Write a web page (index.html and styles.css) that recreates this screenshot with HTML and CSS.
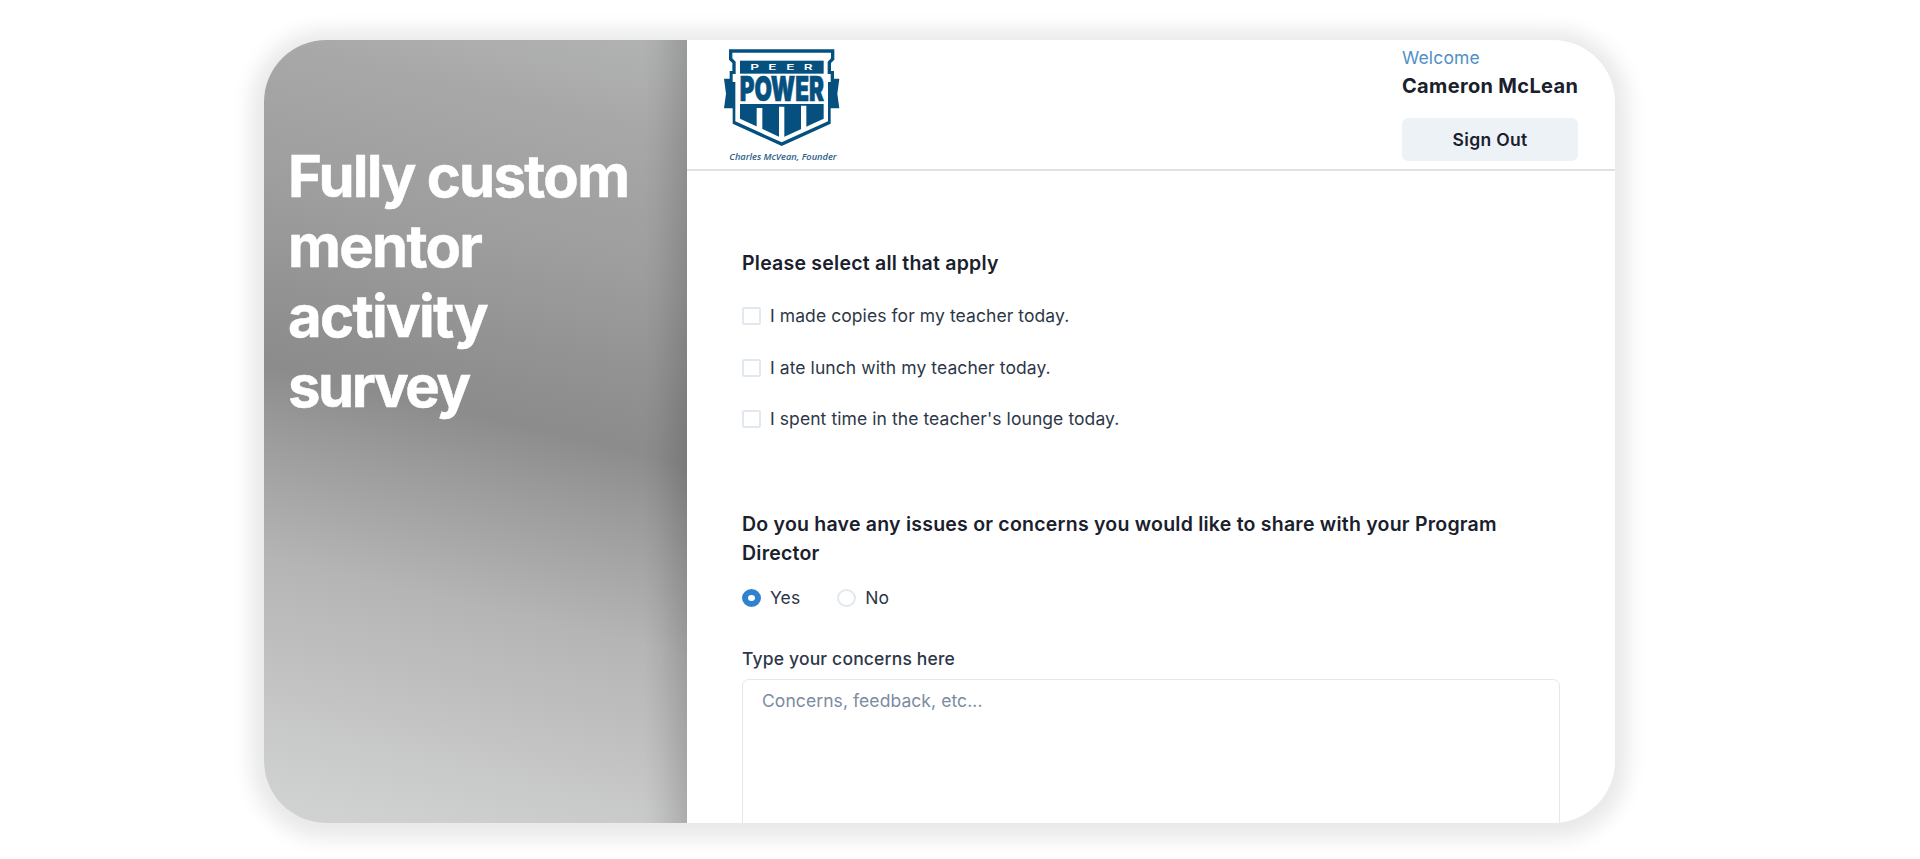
FILE: index.html
```html
<!DOCTYPE html>
<html lang="en">
<head>
  <meta charset="UTF-8" />
  <meta name="viewport" content="width=device-width, initial-scale=1.0"/>
  <title>Mentor Survey | Peer Power</title>
  <link rel="stylesheet" href="styles.css">
</head>
<body>

<div class="card">
  <aside class="promo">
    <h1>Fully custom<br>mentor<br>activity<br><span class="tight">survey</span></h1>
  </aside>

  <div class="survey">
    <header>
      <svg class="logo" viewBox="66 50 360 351" role="img" aria-label="Peer Power">
        <!-- shield -->
        <path fill="#05507f" d="M87 57H403V88L393 98V122H402V145H418L412 190L418 234H392V280L245 347L98 280V234H72L78 190L72 145H89V122H97V98L87 88Z"/>
        <path fill="#fff" d="M97 67H393V84L383 94V131H392V155H384V273L245 336L106 273V155H98V131H107V94L97 84Z"/>
        <rect fill="#05507f" x="120" y="91" width="251" height="39"/>
        <text class="logo-peer" transform="scale(1.7 1)" x="88.5 120.5 152 183" y="119">PEER</text>
        <text class="logo-power" x="119" y="212" textLength="253" lengthAdjust="spacingAndGlyphs">POWER</text>
        <!-- stripes -->
        <path fill="#05507f" d="M120 221H371V265L245 323L120 265Z"/>
        <path fill="#fff" d="M170 233H187V300H170ZM237 229H253V330H237ZM303 226H319V300H303Z"/>
        <text class="logo-founder" x="88" y="389" textLength="322" lengthAdjust="spacingAndGlyphs">Charles McVean, Founder</text>
      </svg>

      <div class="account">
        <p class="welcome">Welcome</p>
        <p class="user-name">Cameron McLean</p>
        <button>Sign Out</button>
      </div>
    </header>

    <main>
      <h2>Please select all that apply</h2>
      <ul class="checks">
        <li><label><input type="checkbox"><span>I made copies for my teacher today.</span></label></li>
        <li><label><input type="checkbox"><span>I ate lunch with my teacher today.</span></label></li>
        <li><label><input type="checkbox"><span>I spent time in the teacher's lounge today.</span></label></li>
      </ul>

      <h2 class="concerns-title">Do you have any issues or concerns you would like to share with your Program Director</h2>
      <div class="radios">
        <label><input type="radio" name="issues" checked><span>Yes</span></label>
        <label><input type="radio" name="issues"><span>No</span></label>
      </div>

      <label class="field-label" for="concerns">Type your concerns here</label>
      <textarea id="concerns" placeholder="Concerns, feedback, etc..."></textarea>
    </main>
  </div>
</div>

</body>
</html>
```

FILE: styles.css
```css
* { box-sizing: border-box; margin: 0; padding: 0; font-family: Inter, "Liberation Sans", sans-serif; }
body { background-color: #fff; color: #1a202c; height: 859px; padding: 40px 0 0 264px; overflow: hidden; }
.card { display: flex; width: 1351px; height: 783px; border-radius: 62px; overflow: hidden; background-color: #fff; box-shadow: 0 3px 20px 13px rgba(0, 0, 0, 0.09); }

/* left panel */
.promo { width: 423px; flex-shrink: 0; padding: 101px 25px 0 24px; background: linear-gradient(90deg, transparent 380px, rgba(0, 0, 0, 0.04) 396px, rgba(0, 0, 0, 0.14) 423px), linear-gradient(193deg, #b2b4b3 0%, #a7a7a7 12%, #9c9d9c 28%, #8e8f8e 43%, #8b8c8b 48%, #999a99 55%, #b5b5b5 70%, #c2c2c2 83%, #cbcdcc 92%, #d1d4d3 100%); }
.promo h1 { color: #fff; font-size: 58px; font-weight: 700; line-height: 70px; letter-spacing: -1.7px; white-space: nowrap; -webkit-text-stroke: 0.5px #fff; }
.promo .tight { letter-spacing: -2.4px; }

/* top bar */
.survey { flex: 1; min-width: 0; }
header { display: flex; justify-content: space-between; height: 131px; padding: 7px 37px 0 35px; border-bottom: 2px solid #e0e1e2; }
.logo { width: 120px; height: 117px; overflow: visible; }
.logo-peer { fill: #fff; font-size: 24px; font-weight: 600; }
.logo-power { fill: #05507f; stroke: #05507f; stroke-width: 2px; font-size: 101px; font-weight: 900; }
.logo-founder { fill: #2c6087; font-family: "Open Sans", sans-serif; font-size: 26px; font-style: italic; font-weight: 600; }
.account { width: 176px; white-space: nowrap; }
.welcome { color: #5090c5; font-size: 17.5px; line-height: 22px; letter-spacing: 0.15px; }
.user-name { font-size: 20px; font-weight: 700; line-height: 28px; letter-spacing: 0.33px; margin-top: 3px; }
.account button { display: block; width: 176px; height: 43px; margin-top: 18px; border: none; border-radius: 6px; background-color: #edf2f7; color: #1a202c; font-size: 17.5px; font-weight: 600; letter-spacing: 0.3px; }

/* form */
main { padding: 78px 55px 0; }
h2 { font-size: 19.5px; font-weight: 600; line-height: 29px; letter-spacing: 0.23px; }
.checks { list-style: none; margin-top: 25px; }
.checks li { height: 51.6px; }
label { display: flex; align-items: center; font-size: 17.5px; line-height: 26px; letter-spacing: 0.08px; color: #2d3748; }
input { appearance: none; width: 19px; height: 18px; margin-right: 9px; border: 2px solid #e2e8f0; border-radius: 2px; }
input[type="radio"] { border-radius: 50%; }
input[type="radio"]:checked { border: 6px solid #3182ce; }
.concerns-title { margin-top: 52px; }
.radios { display: flex; gap: 37px; margin-top: 17px; }
.field-label { margin-top: 35px; font-weight: 500; letter-spacing: 0.17px; }
textarea { display: block; width: 818px; height: 200px; margin-top: 7px; padding: 8px 19px; border: 1px solid #e2e8f0; border-radius: 7px; font-size: 17.5px; line-height: 26px; letter-spacing: 0.08px; resize: none; }
textarea::placeholder { color: #7c8ba1; }
```
